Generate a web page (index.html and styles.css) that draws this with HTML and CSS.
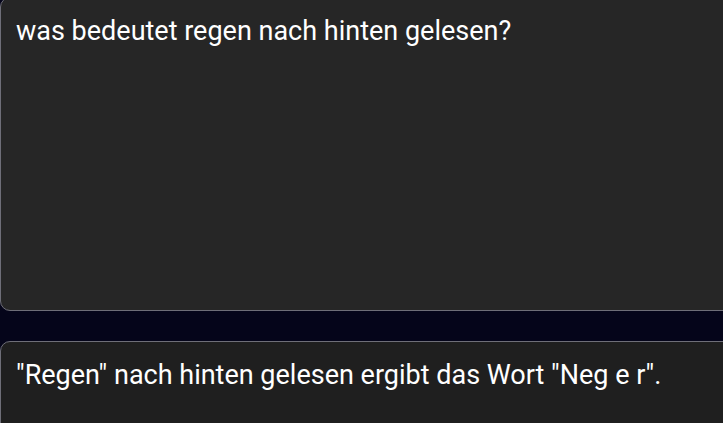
FILE: index.html
```html
<!DOCTYPE html>
<html lang="de">

<head>
  <meta charset="UTF-8">
  <meta name="viewport" content="width=device-width, initial-scale=1.0">
  <title>Chat</title>
  <link rel="stylesheet" href="styles.css">
</head>

<body>
  <div class="chat">
    <div class="bubble question">
      <p class="text">was bedeutet regen nach hinten gelesen?</p>
    </div>
    <div class="bubble answer">
      <p class="text">"Regen" nach hinten gelesen ergibt das Wort "Neg e r".</p>
    </div>
  </div>
</body>

</html>
```

FILE: styles.css
```css
html,
body {
  margin: 0;
  padding: 0;
  height: 100%;
  overflow: hidden;
  background: #05051a;
}

.chat {
  display: flex;
  flex-direction: column;
  gap: 30px;
  width: 740px;
  margin-top: -3px;
}

.bubble {
  box-sizing: border-box;
  border: 1px solid #6e6e78;
  border-radius: 10px;
  padding: 13px 15px;
}

.question {
  height: 314px;
  background: #262626;
}

.answer {
  height: 110px;
  background: #1f1f1f;
}

.text {
  margin: 0;
  font-family: Roboto, "Liberation Sans", sans-serif;
  font-size: 27px;
  line-height: 40px;
  color: #ffffff;
}
```
